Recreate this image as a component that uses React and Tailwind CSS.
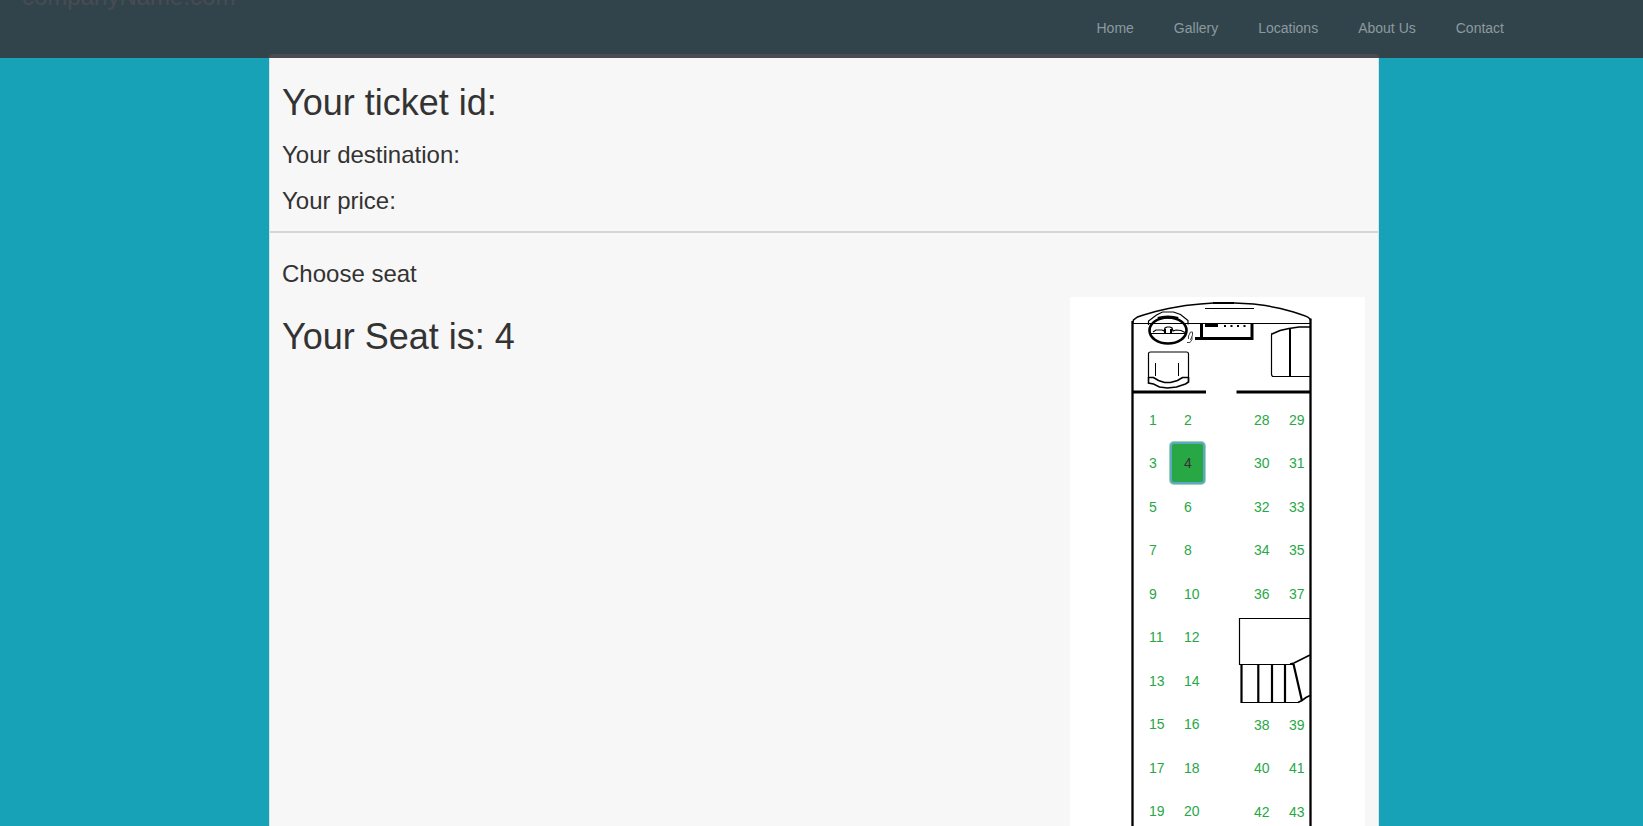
const LEFT_ROWS = [1, 3, 5, 7, 9, 11, 13, 15, 17, 19];
const RIGHT_FRONT = [28, 30, 32, 34, 36];
const RIGHT_REAR = [38, 40, 42];
const NAV = ["Home", "Gallery", "Locations", "About Us", "Contact"];

function Seat({ n, selected }) {
  if (selected) {
    return (
      <button className="mb-[1px] rounded-[4px] border-2 border-[#5fa5c4] bg-[#28a745] pl-[12px] text-left text-[#333] shadow-[0_0_0_1px_rgba(40,167,69,0.45)]">
        {n}
      </button>
    );
  }
  return <button className="pl-[14px] text-left text-[#28a745]">{n}</button>;
}

function SeatBlock({ rows, selected }) {
  return (
    <div className="grid auto-rows-[43.46px] grid-cols-[35px_35px]">
      {rows.flatMap((n) => [n, n + 1]).map((n) => (
        <Seat key={n} n={n} selected={n === selected} />
      ))}
    </div>
  );
}

function BusOutline() {
  return (
    <svg className="absolute inset-0" width="295" height="529" viewBox="1070 297 295 529" fill="none" stroke="#000" strokeWidth="1">
      <path d="M1132.500 826V321M1310.500 826V318.500" strokeWidth="2.300" />
      <path d="M1132.500 323l1-3 4-3 6-2 12-3.500 13-3 17-3 15-1.500 13-1h21l19 1 12 1.500 15 3 13 3.500 9 3q7 2 8 5" strokeWidth="1.500" />
      <path d="M1213 303h21" strokeWidth="2" />
      <path d="M1205 308.500h49M1133 323.500h177" strokeWidth="1.200" />
      <path d="M1148.500 325v-4l8-6 6-3h11l7 2.500 7.500 6v4" strokeWidth="1.200" />
      <ellipse cx="1168" cy="330.500" rx="18.500" ry="13" strokeWidth="2.600" />
      <path d="M1158 318.500q4-1.500 10-1.500t10 1.500" strokeWidth="3" />
      <path d="M1151 333.500h34M1153 332l3-2h6l2 1 1-3 2-1h3l2 1 1 3 3-1 5 .5 4 2" strokeWidth="1.200" />
      <path d="M1165 329v4M1171 329v4" strokeWidth="2" />
      <path d="M1187 342.500h3l2-3v-3M1188.500 339v-3l2-4h2v3l-2 5" stroke="#444" />
      <path d="M1195 338.500h7" strokeWidth="3" />
      <path d="M1201.500 324v14.500h50.500V324" strokeWidth="3" />
      <path d="M1205 325.500h13" strokeWidth="3" />
      <path d="M1224 326h24" strokeWidth="2" strokeDasharray="2 4.500" />
      <path d="M1148.500 378v-24.500q0-1.500 2-1.500h36q2 0 2 2v28" strokeWidth="1.200" />
      <path d="M1148.500 377.500h5l5 3 6 2h6l7-2 5-3h6M1148.500 377v6l5 1 6 3 8 1 9-1 6-2 3-1 3-2v-5" strokeWidth="1.600" />
      <path d="M1155.500 363v13M1178.500 363v13" />
      <path d="M1310 327h-11l-10 1.500-9 2-8 3.500" strokeWidth="1.600" />
      <path d="M1272 333l-.5 2v39q0 2.500 2 2.500h37" strokeWidth="1.200" />
      <path d="M1290 329v48" strokeWidth="2" />
      <path d="M1132 392h74M1236.500 392h74" strokeWidth="3" />
      <path d="M1310 618.500h-70.500v46h54M1241 702.500h57" strokeWidth="1.200" />
      <path d="M1290 664l4-1 6-3 10-5M1298 702.500l4-2 4-3 4-2" strokeWidth="1.600" />
      <path d="M1241.500 664v39M1258.300 664v39M1272 664v39M1285 664v39M1293.500 664l8.500 37" strokeWidth="2.200" />
    </svg>
  );
}

export default function App() {
  return (
    <div className="flex h-[826px] flex-col overflow-hidden bg-[#18a2b8] font-['Liberation_Sans',Arial,sans-serif] text-[#333]">
      <header className="relative flex h-[58px] shrink-0 justify-between bg-[#32444b] pl-[22px] pr-[139px]">
        <div className="-mt-[17px] text-[24px] leading-[28px] text-[#484c52]">companyName.com</div>
        <nav className="flex gap-[40px] pt-[18px] text-[14px] leading-[20px] text-[#8b9a9f]">
          {NAV.map((item) => (
            <a key={item} href="#">{item}</a>
          ))}
        </nav>
        <div className="absolute bottom-0 left-[269px] h-[4px] w-[1110px] rounded-t-[4px] bg-[#4a4c50]" />
      </header>
      <main className="ml-[269px] flex w-[1110px] flex-1 flex-col border-x border-[#d8e3e5] bg-[#f7f7f7]">
        <section className="flex h-[175px] shrink-0 flex-col border-b-2 border-[#d6d6d6] pl-[12px] pt-[25px]">
          <h1 className="text-[36px] leading-[40px]">Your ticket id:</h1>
          <h2 className="mt-[19px] text-[24px] leading-[26px]">Your destination:</h2>
          <h2 className="mt-[20px] text-[24px] leading-[26px]">Your price:</h2>
        </section>
        <section className="flex flex-1 flex-col pl-[12px] pr-[13px] pt-[28px]">
          <h2 className="text-[24px] leading-[26px]">Choose seat</h2>
          <div className="flex flex-1 justify-between pt-[10px]">
            <h1 className="pt-[20px] text-[36px] leading-[40px]">Your Seat is: 4</h1>
            <div className="relative h-[529px] w-[295px] bg-white">
              <BusOutline />
              <div className="relative flex gap-[35px] pl-[65px] pt-[101.200px] text-[14px] leading-[20px]">
                <SeatBlock rows={LEFT_ROWS} selected={4} />
                <div className="flex flex-col gap-[87.500px]">
                  <SeatBlock rows={RIGHT_FRONT} />
                  <SeatBlock rows={RIGHT_REAR} />
                </div>
              </div>
            </div>
          </div>
        </section>
      </main>
    </div>
  );
}
